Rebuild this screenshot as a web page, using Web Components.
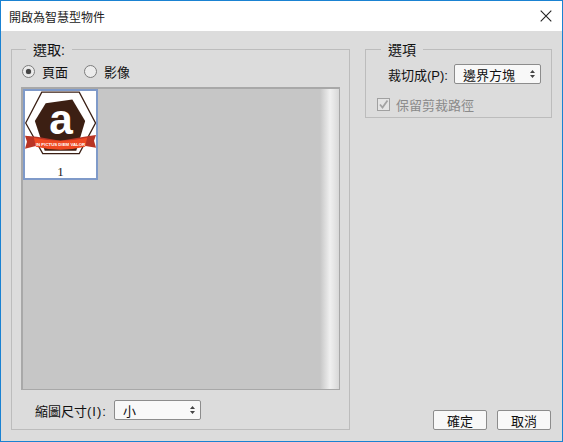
<!DOCTYPE html>
<html lang="zh-Hant">
<head>
<meta charset="utf-8">
<title>開啟為智慧型物件</title>
<style>
  html, body { margin: 0; height: 100%; }
  body { font: 13px "Liberation Sans", "Noto Sans CJK TC", sans-serif; color: #111; }
</style>
</head>
<body>
<pdf-dialog caption="開啟為智慧型物件">
  <option-group slot="left" label="選取:">
    <div style="display:flex;gap:16px;height:24px;align-items:center;margin:1px 0 0 1px">
      <radio-option checked>頁面</radio-option>
      <radio-option>影像</radio-option>
    </div>
    <thumb-panel></thumb-panel>
    <div style="display:flex;align-items:center;gap:7px;margin:10px 0 0 14px;white-space:nowrap">
      <span>縮圖尺寸<span style="letter-spacing:1px">(I):</span></span>
      <select-box style="width:87px">小</select-box>
    </div>
  </option-group>
  <option-group slot="right" label="選項" style="flex:none;height:78px;--legend-x:6px">
    <div style="display:flex;align-items:center;gap:6px;margin:6px 0 0 13px;white-space:nowrap">
      <span>裁切成(P):</span>
      <select-box style="width:87px">邊界方塊</select-box>
    </div>
    <check-option style="margin:11px 0 0 2px">保留剪裁路徑</check-option>
  </option-group>
  <dialog-button slot="buttons">確定</dialog-button>
  <dialog-button slot="buttons">取消</dialog-button>
</pdf-dialog>

<script>
const dialogTemplate = document.createElement('template')
dialogTemplate.innerHTML = `
<style>
  :host { display: flex; flex-direction: column; box-sizing: border-box; width: 563px; height: 442px; border: 1px solid #1a82d2; background: #dcdcdc; }
  .title { display: flex; align-items: center; justify-content: space-between; height: 30px; flex: none; background: #fff; padding: 0 10px 0 8px; color: #222; font-size: 12px; }
  .close { width: 12px; height: 12px; }
  .main { flex: 1; display: flex; gap: 15px; padding: 9px 10px 11px; min-height: 0; }
  .left { width: 339px; display: flex; }
  .right { flex: 1; display: flex; flex-direction: column; justify-content: space-between; }
  .buttons { display: flex; justify-content: flex-end; gap: 10px; padding-right: 1px; }
</style>
<div class="title"><span id="cap"></span>
  <svg class="close" viewBox="0 0 12 12"><path d="M.7.7l10.6 10.6M11.3.7L.7 11.3" stroke="#222" stroke-width="1.1" fill="none"/></svg>
</div>
<div class="main">
  <div class="left"><slot name="left"></slot></div>
  <div class="right"><slot name="right"></slot><div class="buttons"><slot name="buttons"></slot></div></div>
</div>`
customElements.define('pdf-dialog', class extends HTMLElement {
  constructor () {
    super()
    this.attachShadow({ mode: 'open' }).appendChild(dialogTemplate.content.cloneNode(true))
    this.shadowRoot.querySelector('#cap').textContent = this.getAttribute('caption')
  }
})

const groupTemplate = document.createElement('template')
groupTemplate.innerHTML = `
<style>
  :host { display: block; flex: 1; box-sizing: border-box; }
  fieldset { margin: 0; padding: 0 9px; border: 1px solid #bcbcbc; box-sizing: border-box; height: 100%; min-width: 0; }
  legend { padding: 2px 7px 0; margin-left: var(--legend-x, 5px); font-size: 14px; line-height: 16px; color: #111; }
</style>
<fieldset><legend></legend><slot></slot></fieldset>`
customElements.define('option-group', class extends HTMLElement {
  constructor () {
    super()
    this.attachShadow({ mode: 'open' }).appendChild(groupTemplate.content.cloneNode(true))
    this.shadowRoot.querySelector('legend').textContent = this.getAttribute('label')
  }
})

const radioTemplate = document.createElement('template')
radioTemplate.innerHTML = `
<style>
  :host { display: inline-flex; align-items: center; gap: 7px; font-size: 13px; }
  i { width: 13px; height: 13px; box-sizing: border-box; border-radius: 50%; border: 1px solid #7c7c7c; background: #ececec; display: flex; align-items: center; justify-content: center; }
  :host([checked]) i::after { content: ""; width: 5px; height: 5px; border-radius: 50%; background: #444; box-shadow: 0 0 1px #555; }
</style>
<i></i><slot></slot>`
customElements.define('radio-option', class extends HTMLElement {
  constructor () {
    super()
    this.attachShadow({ mode: 'open' }).appendChild(radioTemplate.content.cloneNode(true))
  }
})

const checkTemplate = document.createElement('template')
checkTemplate.innerHTML = `
<style>
  :host { display: flex; align-items: center; gap: 6px; color: #8a8a8a; font-size: 13px; }
  svg { width: 13px; height: 13px; }
</style>
<svg viewBox="0 0 13 13"><rect x=".5" y=".5" width="12" height="12" fill="#e4e4e4" stroke="#a0a0a0"/><path d="M3 6.5l2.5 3L10.5 2.5" fill="none" stroke="#a2a2a2" stroke-width="1.8"/></svg><slot></slot>`
customElements.define('check-option', class extends HTMLElement {
  constructor () {
    super()
    this.attachShadow({ mode: 'open' }).appendChild(checkTemplate.content.cloneNode(true))
  }
})

const selectTemplate = document.createElement('template')
selectTemplate.innerHTML = `
<style>
  :host { display: flex; align-items: center; justify-content: space-between; box-sizing: border-box; height: 20px; padding: 0 5px 0 8px; border: 1px solid #8c8c8c; border-radius: 2px; background: #f8f8f8; font-size: 13px; }
  svg { width: 5px; height: 8px; }
</style>
<slot></slot>
<svg viewBox="0 0 5 8"><path d="M2.5 0L5 3H0zM2.5 8L0 5h5z" fill="#444"/></svg>`
customElements.define('select-box', class extends HTMLElement {
  constructor () {
    super()
    this.attachShadow({ mode: 'open' }).appendChild(selectTemplate.content.cloneNode(true))
  }
})

const buttonTemplate = document.createElement('template')
buttonTemplate.innerHTML = `
<style>
  :host { display: flex; align-items: center; justify-content: center; box-sizing: border-box; width: 54px; height: 20px; border: 1px solid #8c8c8c; border-radius: 2px; background: #f8f8f8; font-size: 13px; }
</style>
<slot></slot>`
customElements.define('dialog-button', class extends HTMLElement {
  constructor () {
    super()
    this.attachShadow({ mode: 'open' }).appendChild(buttonTemplate.content.cloneNode(true))
  }
})

const thumbTemplate = document.createElement('template')
thumbTemplate.innerHTML = `
<style>
  :host { display: block; box-sizing: border-box; height: 303px; border: 1px solid #a8a8a8; border-width: 2px 1px 1px 2px; margin-top: 4px; background: linear-gradient(to right, #c6c6c6 0, #c6c6c6 297px, #f0f0f0 307px, #d8d8d8 316px); }
  .page { width: 75px; height: 91px; box-sizing: border-box; border: 2px solid #7f9ac9; background: #fff; display: flex; flex-direction: column; align-items: center; }
  svg { width: 71px; height: 70px; display: block; flex: none; }
  span { font: 13px "Liberation Serif", serif; color: #222; line-height: 14px; margin-top: 4px; }
  text { font-family: "Liberation Sans", sans-serif; }
</style>
<div class="page">
  <svg viewBox="0 0 72 70">
    <path d="M17 .7H55L71.5 32L55 63H18L.7 32Z" fill="#fff" stroke="#3a1f14" stroke-width="1.3"/>
    <path d="M21 12L48 8L61 30L52 60H20L10 30Z" fill="#3c1f13"/>
    <text x="36.5" y="43" text-anchor="middle" font-size="43" font-weight="700" fill="#fff">a</text>
    <path d="M0 45L12 46L36 50L60 46L72 44L70 50L72 57L60 55L36 58L12 55L0 58L2 51Z" fill="#b93424"/>
    <path d="M9 47Q36 53 63 47L61 56Q36 62 11 56Z" fill="#ee4a23"/>
    <text x="36" y="55" text-anchor="middle" font-size="4.4" font-weight="700" fill="#fff">IN PICTUS DIEM VALOR</text>
  </svg>
  <span>1</span>
</div>`
customElements.define('thumb-panel', class extends HTMLElement {
  constructor () {
    super()
    this.attachShadow({ mode: 'open' }).appendChild(thumbTemplate.content.cloneNode(true))
  }
})
</script>
</body>
</html>
